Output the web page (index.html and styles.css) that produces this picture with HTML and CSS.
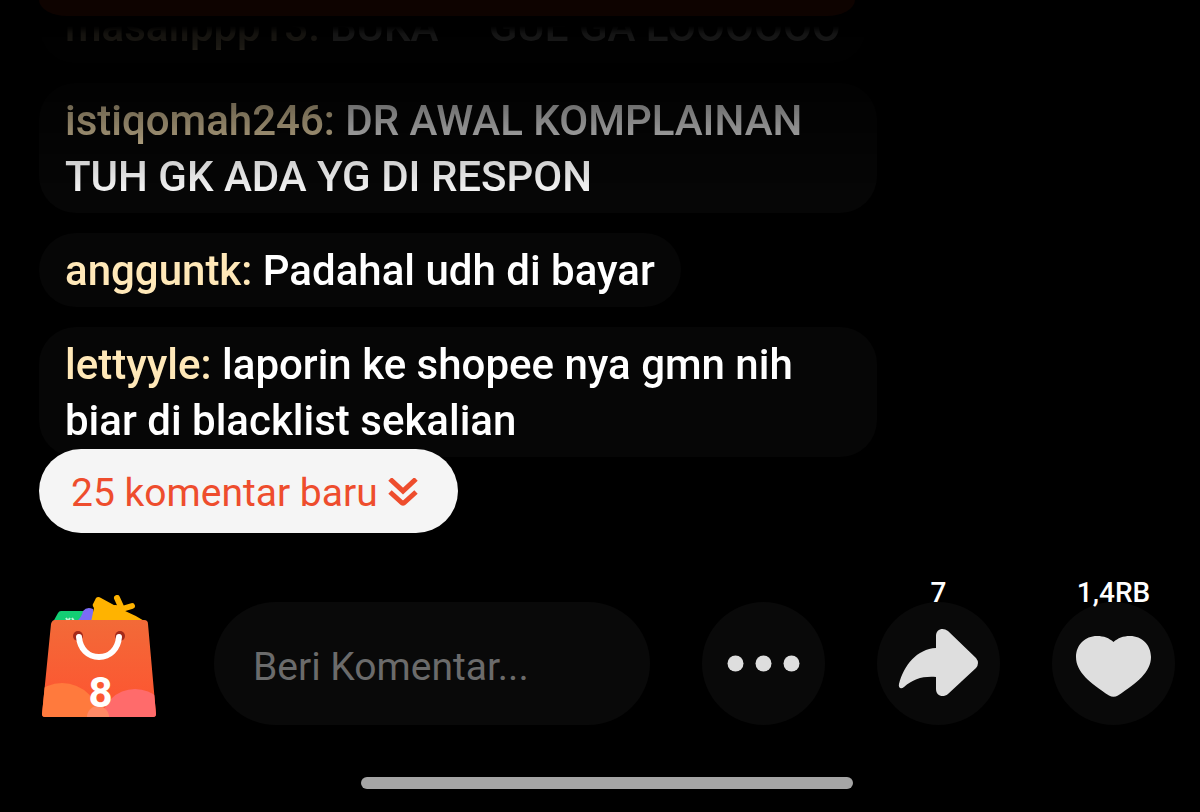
FILE: index.html
```
<!DOCTYPE html>
<html lang="id">

<head>
  <meta charset="UTF-8" />
  <meta name="viewport" content="width=device-width, initial-scale=1.0" />
  <title>Live</title>
  <link rel="stylesheet" href="styles.css">
</head>

<body>
  <main class="live">
    <div class="banner"></div>

    <!-- comment list, fades out at the top -->
    <ul class="comments">
      <li><span class="name">masalippp13:</span> BUKA &nbsp; &nbsp;&thinsp;GUE GA LOOOOOO</li>
      <li><span class="name">istiqomah246:</span> DR AWAL KOMPLAINAN TUH GK ADA YG DI RESPON</li>
      <li><span class="name">angguntk:</span> Padahal udh di bayar</li>
      <li><span class="name">lettyyle:</span> laporin ke shopee nya gmn nih biar di blacklist sekalian</li>
    </ul>

    <button class="more" type="button">
      25 komentar baru
      <svg width="30" height="30" viewBox="0 0 30 30" aria-hidden="true">
        <path d="M2 1L15 13L28 1M2 14L13 24Q15 26 17 24L28 14" />
      </svg>
    </button>

    <!-- bottom bar -->
    <div class="bar">
      <button class="bag" type="button" aria-label="Produk">
        <svg width="123" height="123" viewBox="0 0 123 123" aria-hidden="true">
          <defs>
            <linearGradient id="bagFill" x1="0" y1="0" x2="0" y2="1">
              <stop offset="0" stop-color="#f26a38" />
              <stop offset="1" stop-color="#ff5230" />
            </linearGradient>
            <clipPath id="bagClip">
              <path d="M16 25H105Q109 25 109 29L117 119Q117 122 114 122H6Q3 122 3 119L12 29Q13 25 16 25Z" />
            </clipPath>
          </defs>
          <path d="M14 27L19 18Q20 16 22 16H46V27Z" fill="#13ce74" />
          <path d="M27 23l2 3M31 23l-2 3M33 23l2 3" stroke="#b9f3d3" stroke-width="2" />
          <path d="M37 27Q43 22 44 16Q48 11 54 14L56 27Z" fill="#7b6cf6" />
          <path d="M52 27L55 13Q53 10 54 9L57 3Q59 1 62 3L84 15Q96 20 107 27Z" fill="#ffb300" />
          <path d="M78 3L83 14L93 11M83 14L76 13" fill="none" stroke="#ffb300" stroke-width="6" stroke-linecap="round" stroke-linejoin="round" />
          <g clip-path="url(#bagClip)">
            <path d="M0 25H123V123H0Z" fill="url(#bagFill)" />
            <circle cx="23" cy="126" r="38" fill="#ff7a3d" />
            <circle cx="96" cy="128" r="34" fill="#ff6b6b" />
            <circle cx="59" cy="122" r="11" fill="#ff8a66" />
          </g>
          <circle cx="39" cy="41" r="5" fill="#a52a1a" />
          <circle cx="81" cy="41" r="5" fill="#a52a1a" />
          <path d="M40 42C41 54 49 62 60 62S79 54 80 42" fill="none" stroke="#fff" stroke-width="6" stroke-linecap="round" />
        </svg>
        <span class="total">8</span>
      </button>

      <input class="field" type="text" placeholder="Beri Komentar..." aria-label="Beri Komentar">

      <button class="round" type="button" aria-label="Lainnya">
        <svg width="123" height="123" viewBox="0 0 123 123" aria-hidden="true">
          <circle cx="33.5" cy="61.5" r="8" />
          <circle cx="61.5" cy="61.5" r="8" />
          <circle cx="89.5" cy="61.5" r="8" />
        </svg>
      </button>

      <button class="round" type="button" aria-label="Bagikan">
        <svg width="123" height="123" viewBox="0 0 123 123" aria-hidden="true">
          <path d="M59 46V34C59 27 66 25 71 29L99 56Q103 61 99 66L71 92C66 96 59 94 59 87V75C46 74 36 77 27 85C24 87.5 21 86 22 82C27 63 40 47 59 46Z" />
        </svg>
        <span class="count">7</span>
      </button>

      <button class="round" type="button" aria-label="Suka">
        <svg width="123" height="123" viewBox="0 0 123 123" aria-hidden="true">
          <path d="M61.5 40C66 36 71 34 78 34C90 34 99 43 99 55C99 70 85 81 66 93.5Q61.5 96 57 93.5C38 81 24 70 24 55C24 43 33 34 45 34C52 34 57 36 61.5 40Z" />
        </svg>
        <span class="count">1,4RB</span>
      </button>
    </div>

    <div class="home"></div>
  </main>
</body>

</html>
```

FILE: styles.css
```
* {
  margin: 0;
  padding: 0;
  box-sizing: border-box;
}

body {
  background: #000;
  color: #fff;
  font-family: Roboto, "Noto Sans", sans-serif;
}

ul {
  list-style: none;
}

button {
  border: none;
  background: none;
  color: inherit;
  font-family: inherit;
  cursor: pointer;
}

.live {
  display: flex;
  flex-direction: column;
  height: 100vh;
  padding: 0 25px 23px 39px;
}

.banner {
  flex: none;
  height: 16px;
  max-width: 816px;
  background: #0e0300;
  border-radius: 0 0 28px 28px / 0 0 16px 16px;
}

.comments {
  flex: 1;
  min-height: 0;
  display: flex;
  flex-direction: column;
  justify-content: flex-end;
  align-items: flex-start;
  gap: 20px;
  overflow: hidden;
  -webkit-mask-image: linear-gradient(transparent 10px, rgba(0, 0, 0, 0.08) 18px, rgba(0, 0, 0, 0.1) 30px, rgba(0, 0, 0, 0.45) 92px, rgba(0, 0, 0, 0.6) 120px, rgba(0, 0, 0, 0.82) 146px, #000 185px);
  mask-image: linear-gradient(transparent 10px, rgba(0, 0, 0, 0.08) 18px, rgba(0, 0, 0, 0.1) 30px, rgba(0, 0, 0, 0.45) 92px, rgba(0, 0, 0, 0.6) 120px, rgba(0, 0, 0, 0.82) 146px, #000 185px);
}

.comments li {
  flex: none;
  max-width: 838px;
  padding: 10px 26px 8px;
  background: #060606;
  border-radius: 37px;
  font-size: 42px;
  font-weight: 500;
  line-height: 56px;
}

.comments .name {
  color: #ffe8b8;
}

.more {
  position: relative;
  flex: none;
  align-self: flex-start;
  display: flex;
  align-items: center;
  gap: 10px;
  height: 84px;
  margin-top: -8px;
  padding: 4px 40px 0 32px;
  border-radius: 42px;
  background: #f5f5f5;
  color: #ee4d2d;
  font-size: 39px;
}

.more svg {
  fill: none;
  stroke: #ee4d2d;
  stroke-width: 5;
}

.bar {
  flex: none;
  display: flex;
  gap: 52px;
  margin-top: 69px;
}

.bag {
  position: relative;
  flex: none;
  width: 123px;
  height: 123px;
}

.bag svg {
  position: absolute;
  left: 0;
  bottom: 7px;
}

.bag .total {
  position: absolute;
  left: 0;
  right: 0;
  bottom: 8px;
  font-size: 42px;
  font-weight: 700;
}

.field {
  flex: 1;
  min-width: 0;
  height: 123px;
  padding: 6px 39px 0;
  border: none;
  border-radius: 62px;
  outline: none;
  background: #090909;
  color: #fff;
  font-family: inherit;
  font-size: 39px;
}

.field::placeholder {
  color: #6b6b6b;
}

.round {
  position: relative;
  flex: none;
  width: 123px;
  height: 123px;
  border-radius: 50%;
  background: #090909;
}

.round svg {
  display: block;
  fill: #dedede;
}

.round .count {
  position: absolute;
  left: 0;
  right: 0;
  top: -25px;
  font-size: 28px;
  font-weight: 500;
  line-height: 32px;
}

.home {
  flex: none;
  align-self: center;
  width: 492px;
  max-width: 100%;
  height: 12px;
  margin-top: 52px;
  border-radius: 6px;
  background: #a5a5a5;
}
```
